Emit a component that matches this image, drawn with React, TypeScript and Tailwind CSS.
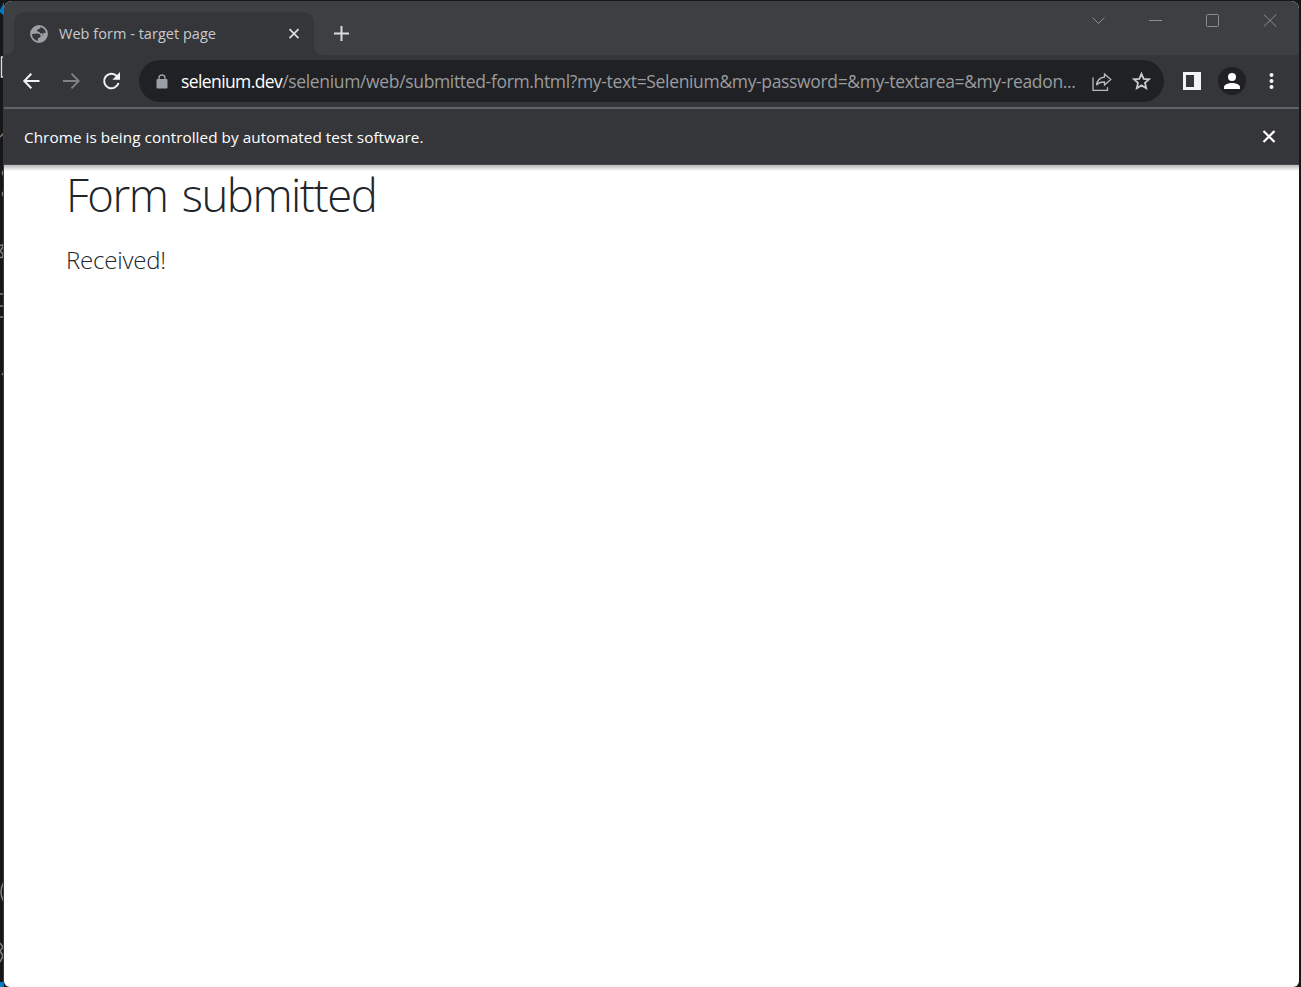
import React from "react";

const text = "whitespace-nowrap font-['Open_Sans','Noto_Sans',sans-serif]";

function Globe() {
  return (
    <svg className="h-[18px] w-[18px] shrink-0" viewBox="0 0 18 18">
      <circle cx="9" cy="9" r="8" fill="none" stroke="#9aa0a6" strokeWidth="1.8" />
      <path d="M1 9.2C1 4 5 1 9.3 1l1 1.6-.3 1.2-2.4.5-.5 2 2.3.6 1 1.7H13l-.3 1.8-2.2.4-.6-1.6-1.9-.7-1.7.1z" fill="#9aa0a6" />
      <path d="M17 8l-3.3-.2-.7 2.4-2.4.6-.5 1.7-2 .6-.3 3.8C13 17.600 17.500 13 17 8z" fill="#9aa0a6" />
    </svg>
  );
}

function TabStrip() {
  return (
    <header className="flex h-[54px] bg-[#3c4043] pt-[11px]">
      <div className="flex w-[10px] items-end bg-[#35363a]">
        <div className="h-full w-full rounded-br-[9px] bg-[#3c4043]" />
      </div>
      <div className="flex w-[300px] items-center rounded-t-[10px] bg-[#35363a] pl-4">
        <Globe />
        <span className={`${text} ml-[11px] w-[157px] text-[14.5px] leading-5 tracking-[0.03px] text-[#c8cacd]`}>Web form - target page</span>
        <svg className="ml-[72px] h-3 w-3" viewBox="0 0 12 12" stroke="#dadce0" strokeWidth="1.7">
          <path d="M1.500 1.200l9 9M10.500 1.200l-9 9" />
        </svg>
      </div>
      <div className="w-[10px] bg-[#35363a]">
        <div className="h-full w-full rounded-bl-[9px] bg-[#3c4043]" />
      </div>
      <svg className="mt-[14px] ml-[9px] h-4 w-4" viewBox="0 0 16 16" stroke="#dadce0" strokeWidth="2">
        <path d="M8.500 0v15M1 7.500h15" />
      </svg>
      <div className="mr-[22px] ml-auto flex h-4 items-center gap-[43px] text-[#8b8e90]">
        <svg className="h-[14px] w-[14px]" viewBox="0 0 14 14" fill="none" stroke="currentColor"><path d="M.5 4.500l6 6 6-6" /></svg>
        <svg className="h-[14px] w-[14px]" viewBox="0 0 14 14" fill="none" stroke="currentColor"><path d="M0 7.500h13" /></svg>
        <svg className="h-[14px] w-[14px]" viewBox="0 0 14 14" fill="none" stroke="currentColor"><rect x=".5" y="1.500" width="12" height="12" rx="1" /></svg>
        <svg className="h-[14px] w-[14px]" viewBox="0 0 14 14" fill="none" stroke="currentColor"><path d="M.8 1.500l12.500 12M13.300 1.500L.8 13.500" /></svg>
      </div>
    </header>
  );
}

function Toolbar() {
  return (
    <nav className="flex h-[52px] items-center bg-[#35363a] pl-[17px]">
      <svg className="h-5 w-5" viewBox="0 0 20 20" fill="none" stroke="#f1f3f4" strokeWidth="2"><path d="M18.500 10H3.500M10.300 2.700L3.300 10l7 7.300" /></svg>
      <svg className="ml-5 h-5 w-5" viewBox="0 0 20 20" fill="none" stroke="#808286" strokeWidth="1.900"><path d="M2 10h15.500M10.500 2.700l7.200 7.300-7.200 7.300" /></svg>
      <svg className="ml-5 h-5 w-5" viewBox="0 0 20 20" fill="none" stroke="#f1f3f4" strokeWidth="2">
        <path d="M17.500 12A7.300 7.300 0 1 1 15.800 5" />
        <path d="M19 1v7.800h-7.600z" fill="#f1f3f4" stroke="none" />
      </svg>
      <div className="ml-[18px] flex h-[42px] w-[1025px] items-center rounded-full bg-[#202124] pl-[17px]">
        <svg className="mt-[2px] h-4 w-3 shrink-0" viewBox="0 0 12 16">
          <rect x=".5" y="5" width="11" height="9.500" rx="1" fill="#9aa0a6" />
          <path d="M3 6V4a3 3 0 0 1 6 0v2" fill="none" stroke="#9aa0a6" strokeWidth="1.400" />
        </svg>
        <div className={`${text} ml-[13px] w-[897px] text-[17.5px] leading-6 tracking-[-0.34px] text-[#9a9c9f]`}>
          <span className="tracking-[-0.6px] text-white">selenium.dev</span>/selenium/web/submitted-form.html?my-text=Selenium&amp;my-password=&amp;my-textarea=&amp;my-readon...
        </div>
        <svg className="mt-px ml-[14px] h-5 w-5 shrink-0" viewBox="0 0 20 20" fill="none" stroke="#b8babd" strokeWidth="1.300">
          <path d="M1 5.500v12.800h14.500v-3" />
          <path d="M12.500 2l6.300 5.600-6.300 5.500V10C8.500 10 6 11 4.500 13.200 5 8.700 7.500 5.700 12.500 5z" />
        </svg>
        <svg className="ml-[19px] h-5 w-5 shrink-0" viewBox="0 0 20 20" fill="none" stroke="#c8cacc" strokeWidth="1.800">
          <path d="M10.500 2.800l2.200 5 5.400.5-4.100 3.600 1.200 5.300-4.700-2.800-4.700 2.800 1.200-5.300-4.100-3.600 5.400-.5z" />
        </svg>
      </div>
      <svg className="ml-[19px] h-[18px] w-[18px]" viewBox="0 0 18 18"><path fill="#f1f3f4" fillRule="evenodd" d="M0 0h18v18H0zM3 3v12h8V3z" /></svg>
      <div className="ml-[17px] flex h-7 w-7 items-center justify-center rounded-full bg-[#202124]">
        <svg className="h-4 w-4" viewBox="0 0 16 16" fill="white"><circle cx="8" cy="4" r="4" /><path d="M0 16v-2c0-2.700 5.300-4 8-4s8 1.300 8 4v2z" /></svg>
      </div>
      <svg className="ml-[22px] h-[18px] w-[6px]" viewBox="0 0 6 18" fill="#f1f3f4"><circle cx="3.500" cy="3" r="2" /><circle cx="3.500" cy="9" r="2" /><circle cx="3.500" cy="15" r="2" /></svg>
    </nav>
  );
}

function Edge() {
  return (
    <svg className="h-full w-1 shrink-0" viewBox="0 0 4 986" fill="none" stroke="#85817a" strokeWidth="1.500">
      <path d="M4 1L0 9v2l4 4zM0 981h4v5H0z" fill="#0078c8" stroke="none" />
      <path d="M4 56H1.500v20H4" stroke="#ddd" />
      <path d="M0 136l4-4M4 169q-3 3 0 6M4 190q-3 3 0 6M0 245q3-3 3 1l-3 4 3 3q0 5-3 3M0 293h4M0 305h4M0 316h4M2 374l2-3M4 881q-6 10 0 20M0 942l3 4-3 4 3 5-3 6" />
      <path d="M3.500 15v966" stroke="#393836" strokeWidth="1" />
    </svg>
  );
}

export default function App() {
  return (
    <div className="flex h-[987px] w-[1301px] overflow-hidden bg-[#171717] pt-px">
      <Edge />
      <div className="flex w-[1295px] flex-col overflow-hidden rounded-tl-[8px] rounded-tr-[8px] rounded-b-[6px] bg-white">
        <TabStrip />
        <Toolbar />
        <aside className="flex h-[58px] shrink-0 items-center justify-between border-t-2 border-b border-t-[#5f6368] border-b-[#494a4c] bg-[#35363a] pr-[23px] pl-5">
          <p className={`${text} text-[15.3px] leading-5 tracking-[0.05px] text-white`}>Chrome is being controlled by automated test software.</p>
          <svg className="h-[14px] w-[14px]" viewBox="0 0 14 14" stroke="white" strokeWidth="2.200"><path d="M1.500 1l11 11M12.500 1l-11 11" /></svg>
        </aside>
        <div className="h-[6px] shrink-0 bg-linear-to-b from-[#b5b5b5] to-white" />
        <main className="pl-[62px] text-[#212529]">
          <h1 className={`${text} -mt-[7px] text-[45.5px] leading-[60px] font-light tracking-[-1.5px] [word-spacing:4px]`}>Form submitted</h1>
          <p className={`${text} mt-[18px] text-[24px] leading-[36px] font-light tracking-[-0.2px]`}>Received!</p>
        </main>
      </div>
    </div>
  );
}
